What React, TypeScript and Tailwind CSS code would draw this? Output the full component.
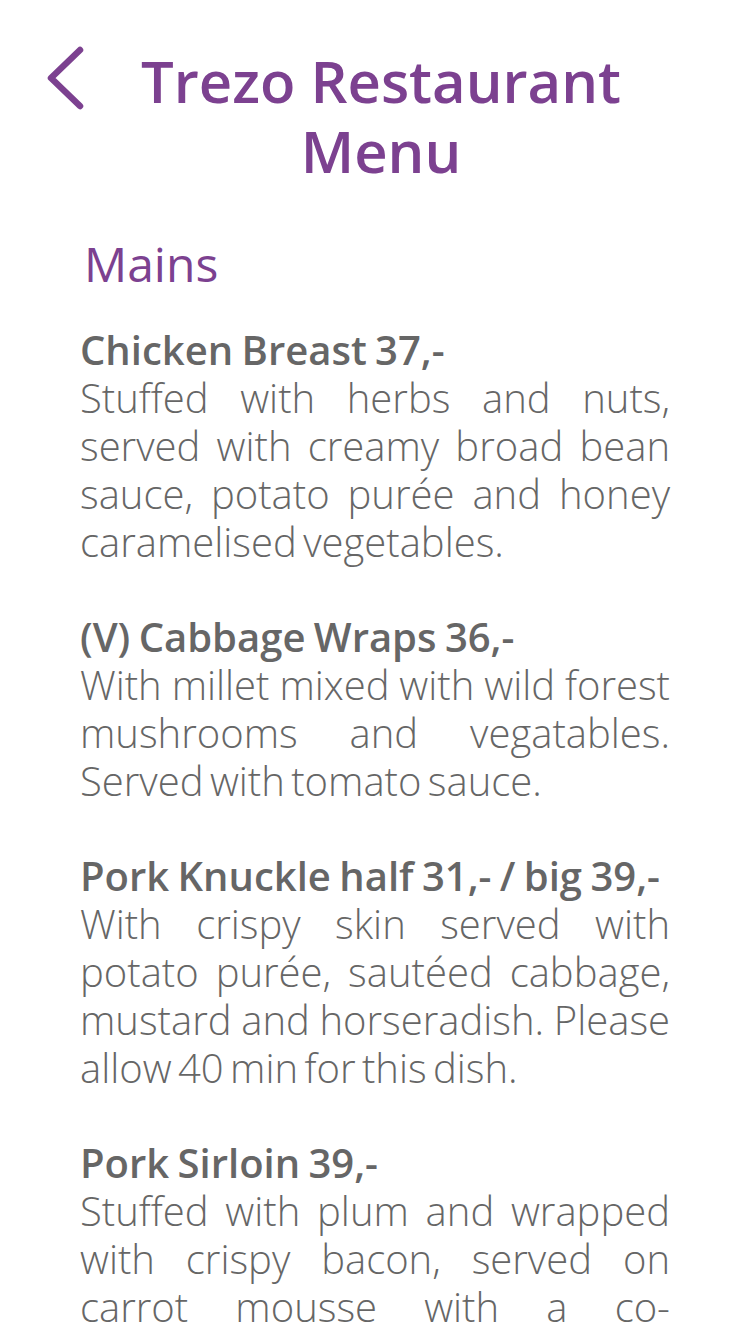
import type { ReactNode } from 'react'

const items: { title: string; desc: ReactNode; tight: boolean }[] = [
  {
    title: 'Chicken Breast 37,-',
    desc: 'Stuffed with herbs and nuts, served with creamy broad bean sauce, potato purée and honey caramelised vegetables.',
    tight: true,
  },
  {
    title: '(V) Cabbage Wraps 36,-',
    desc: 'With millet mixed with wild forest mushrooms and vegatables. Served with tomato sauce.',
    tight: true,
  },
  {
    title: 'Pork Knuckle half 31,- / big 39,-',
    desc: 'With crispy skin served with potato purée, sautéed cabbage, mustard and horseradish. Please allow 40 min for this dish.',
    tight: true,
  },
  {
    title: 'Pork Sirloin 39,-',
    desc: (
      <>
        Stuffed with plum and wrapped with crispy bacon, served on{' '}
        <span className="[word-spacing:8px]">carrot mousse with a co-riander</span> and orange sauce.
      </>
    ),
    tight: false,
  },
]

export default function App() {
  return (
    <div
      className="w-[750px] h-[1334px] overflow-hidden bg-white"
      style={{ fontFamily: '"Open Sans", "Noto Sans", sans-serif' }}
    >
      {/* Header */}
      <div className="relative pt-[46px]">
        <button className="absolute left-[44px] top-[46px] w-[44px] h-[64px] flex items-center justify-center">
          <svg width="40" height="64" viewBox="0 0 40 64" fill="none">
            <path
              d="M34 4 L5 32 L34 60"
              stroke="#7c4190"
              strokeWidth="6.5"
              strokeLinecap="round"
              strokeLinejoin="round"
            />
          </svg>
        </button>
        <h1 className="pl-[12px] text-center text-[58px] leading-[70px] font-semibold text-[#7c4190]">
          Trezo Restaurant
          <br />
          Menu
        </h1>
      </div>

      {/* Section */}
      <div className="mt-[48px] px-[80px]">
        <h2 className="pl-[4px] text-[48px] leading-[60px] font-normal text-[#7c4190]">Mains</h2>

        <div className="mt-[32px] flex flex-col gap-[47px]">
          {items.map((item) => (
            <div key={item.title} className="text-[#666666]">
              <div className="text-[40px] leading-[48px] font-semibold [word-spacing:-2px]">{item.title}</div>
              <p
                className={
                  item.tight
                    ? 'text-[40px] leading-[48px] font-light text-justify [word-spacing:-4px]'
                    : 'text-[40px] leading-[48px] font-light text-justify'
                }
              >
                {item.desc}
              </p>
            </div>
          ))}
        </div>
      </div>
    </div>
  )
}
